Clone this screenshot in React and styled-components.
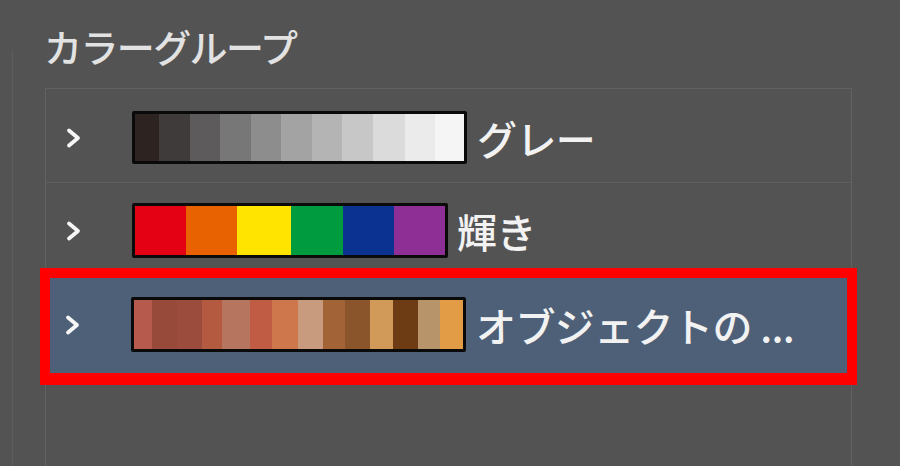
import React from "react";
import styled, { createGlobalStyle } from "styled-components";

const Global = createGlobalStyle`
  html, body { margin: 0; padding: 0; background: #535353; }
  body { width: 900px; height: 466px; overflow: hidden; font-family: "Noto Sans CJK JP", "Noto Sans", sans-serif; }
`;

const Page = styled.div`
  display: grid;
  grid-template-columns: 13px 1fr;
  width: 900px;
  height: 466px;
  background: #535353;
`;

const Gutter = styled.div`
  padding-top: 50px;
  display: flex;
`;

const Rule = styled.div`
  flex: 1;
  border-right: 1px solid #5d5d5d;
`;

const Content = styled.div`
  display: flex;
  flex-direction: column;
  padding: 27px 0 0 32px;
`;

const Title = styled.h2`
  margin: 0 0 0 -1px;
  font-weight: 500;
  font-size: 38px;
  line-height: 38px;
  letter-spacing: -1.6px;
  color: #e2e2e2;
`;

const List = styled.div`
  margin-top: 23px;
  width: 807px;
  flex: 1;
  border: 1px solid #626262;
  border-bottom: none;
  box-sizing: border-box;
  display: flex;
  flex-direction: column;
`;

const Row = styled.div`
  display: flex;
  align-items: center;
  padding: ${(p) => p.$pad};
  border-bottom: 1px solid #5f5f5f;
  padding-left: 18px;
`;

const SelectedRow = styled.div`
  display: flex;
  align-items: center;
  margin: -1px -6px 0;
  padding: 19px 0 21px 13px;
  background: #4e6077;
  border: 10px solid #ff0000;
  border-bottom-width: 12px;
`;

const Chevron = styled.svg`
  width: 18px;
  height: 24px;
  flex: none;
  margin-right: 50px;
`;

const Swatch = styled.div`
  display: flex;
  flex: none;
  width: ${(p) => p.$w}px;
  height: ${(p) => p.$h}px;
  border: 3px solid #0a0a0a;
  border-radius: 2px;
  box-sizing: border-box;
  overflow: hidden;
`;

const Cell = styled.div`
  flex: ${(p) => p.$grow} 1 0;
  background: ${(p) => p.$c};
`;

const Label = styled.span`
  margin-left: ${(p) => p.$gap}px;
  font-weight: 500;
  font-size: 40px;
  line-height: 44px;
  letter-spacing: -0.6px;
  color: #f2f2f2;
  white-space: nowrap;
`;

const grays = [
  ["#2d2422", 0.8],
  ["#3f3b3a", 1],
  ["#5d5b5b", 1],
  ["#777777", 1],
  ["#8d8d8d", 1],
  ["#a3a3a3", 1],
  ["#b4b4b4", 1],
  ["#c7c7c7", 1],
  ["#dbdbdb", 1.05],
  ["#ebebeb", 1],
  ["#f5f5f5", 0.95],
];

const bright = [
  ["#e50114", 1],
  ["#e96202", 1],
  ["#ffe400", 1.05],
  ["#009b3f", 1],
  ["#0b3290", 1],
  ["#8d2f95", 1],
];

const objects = [
  ["#b65a4e", 18],
  ["#984a3a", 25],
  ["#9c4c3c", 25],
  ["#b45a40", 20],
  ["#b5755f", 28],
  ["#c05c43", 22],
  ["#ce774d", 25],
  ["#c89a7e", 25],
  ["#a26336", 22],
  ["#8a552b", 25],
  ["#d29a58", 23],
  ["#6e3c14", 25],
  ["#b8946a", 22],
  ["#e29c45", 23],
];

function Arrow() {
  return (
    <Chevron viewBox="0 0 18 24">
      <polyline
        points="5,4.5 14,12 5,19.5"
        fill="none"
        stroke="#f6f6f6"
        strokeWidth="3.8"
        strokeLinecap="round"
        strokeLinejoin="round"
      />
    </Chevron>
  );
}

function Bar({ colors, w, h }) {
  return (
    <Swatch $w={w} $h={h}>
      {colors.map(([c, g], i) => (
        <Cell key={i} $c={c} $grow={g} />
      ))}
    </Swatch>
  );
}

export default function App() {
  return (
    <>
      <Global />
      <Page>
        <Gutter>
          <Rule />
        </Gutter>
        <Content>
          <Title>カラーグループ</Title>
          <List>
            <Row $pad="22px 0 18px">
              <Arrow />
              <Bar colors={grays} w={335} h={53} />
              <Label $gap={10}>グレー</Label>
            </Row>
            <Row $pad="20px 0 10px">
              <Arrow />
              <Bar colors={bright} w={316} h={55} />
              <Label $gap={9}>輝き</Label>
            </Row>
            <SelectedRow>
              <Arrow />
              <Bar colors={objects} w={335} h={55} />
              <Label $gap={10}>オブジェクトの ...</Label>
            </SelectedRow>
          </List>
        </Content>
      </Page>
    </>
  );
}
